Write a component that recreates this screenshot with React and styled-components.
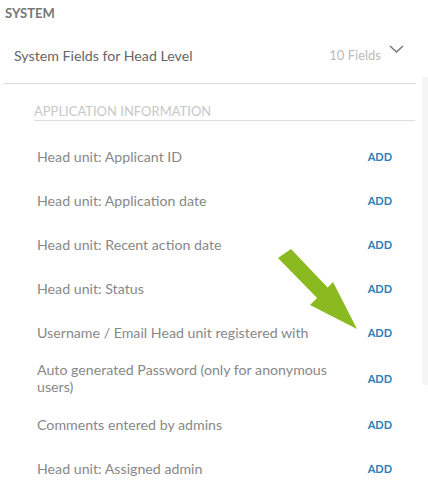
import styled, { createGlobalStyle } from "styled-components"

const GlobalStyle = createGlobalStyle`
    body {
        margin: 0;
        background: #ffffff;
        font-family: Lato, "Open Sans", sans-serif;
    }
`

const Page = styled.div`
    position: relative;
    width: 428px;
    height: 503px;
    overflow: hidden;
    padding-top: 5px;
    box-sizing: border-box;
`

const SectionTitle = styled.div`
    padding-left: 5px;
    font-size: 13px;
    line-height: 16px;
    font-weight: 700;
    color: #777777;
`

const Panel = styled.div`
    margin-left: 3px;
    width: 413px;
`

const Header = styled.div`
    display: flex;
    align-items: center;
    height: 57px;
    margin-top: 6px;
    padding: 0 12px 0 11px;
    box-sizing: border-box;
    border-bottom: 1px solid #dddddd;
`

const HeaderTitle = styled.div`
    flex: 1;
    font-size: 14.2px;
    color: #666666;
`

const FieldCount = styled.div`
    font-size: 13px;
    color: #bbbbbb;
    margin-right: 8px;
`

const Chevron = styled.svg`
    width: 15px;
    height: 8px;
    margin-bottom: 12px;
`

const Body = styled.div`
    display: flex;
    align-items: flex-start;
`

const Content = styled.div`
    width: 382px;
    margin-left: 34px;
    padding-top: 19px;
`

const ScrollTrack = styled.div`
    width: 6px;
    height: 308px;
    margin-top: -7px;
    margin-left: 7px;
    background: #f5f5f5;
    border-radius: 3px 0 0 3px;
`

const GroupTitle = styled.div`
    font-size: 13px;
    line-height: 16px;
    color: #c8c8c8;
    text-transform: uppercase;
    padding-bottom: 1px;
    border-bottom: 1px solid #dddddd;
    margin-bottom: 13px;
`

const Row = styled.div`
    display: flex;
    align-items: center;
    min-height: 30px;
    padding: 7px 23px 7px 3px;
`

const Label = styled.div`
    flex: 1;
    font-size: 14.2px;
    line-height: 17px;
    color: #888888;
    padding-right: 12px;
`

const AddButton = styled.button`
    border: none;
    background: none;
    padding: 0;
    font-family: inherit;
    font-size: 11px;
    font-weight: 700;
    color: #2b7db6;
    cursor: pointer;
`

const Pointer = styled.svg`
    position: absolute;
    left: 270px;
    top: 245px;
    width: 100px;
    height: 95px;
`

const fields = [
    "Head unit: Applicant ID",
    "Head unit: Application date",
    "Head unit: Recent action date",
    "Head unit: Status",
    "Username / Email Head unit registered with",
    "Auto generated Password (only for anonymous users)",
    "Comments entered by admins",
    "Head unit: Assigned admin",
]

const App = () => {
    return (
        <Page>
            <GlobalStyle />
            <SectionTitle>SYSTEM</SectionTitle>
            <Panel>
                <Header>
                    <HeaderTitle>System Fields for Head Level</HeaderTitle>
                    <FieldCount>10 Fields</FieldCount>
                    <Chevron viewBox="0 0 15 8">
                        <polyline
                            points="1,1 7.5,7 14,1"
                            fill="none"
                            stroke="#777777"
                            strokeWidth="1.5"
                        />
                    </Chevron>
                </Header>
            </Panel>
            <Body>
                <Content>
                    <GroupTitle>Application Information</GroupTitle>
                    {fields.map((f) => (
                        <Row key={f}>
                            <Label>{f}</Label>
                            <AddButton>ADD</AddButton>
                        </Row>
                    ))}
                </Content>
                <ScrollTrack />
            </Body>
            <Pointer viewBox="0 0 100 95">
                <polygon
                    points="8,13 21,4 57.6,42.4 63,37 87,84 40,60 47.1,52.9"
                    fill="#8aba1f"
                />
            </Pointer>
        </Page>
    )
}

export default App
